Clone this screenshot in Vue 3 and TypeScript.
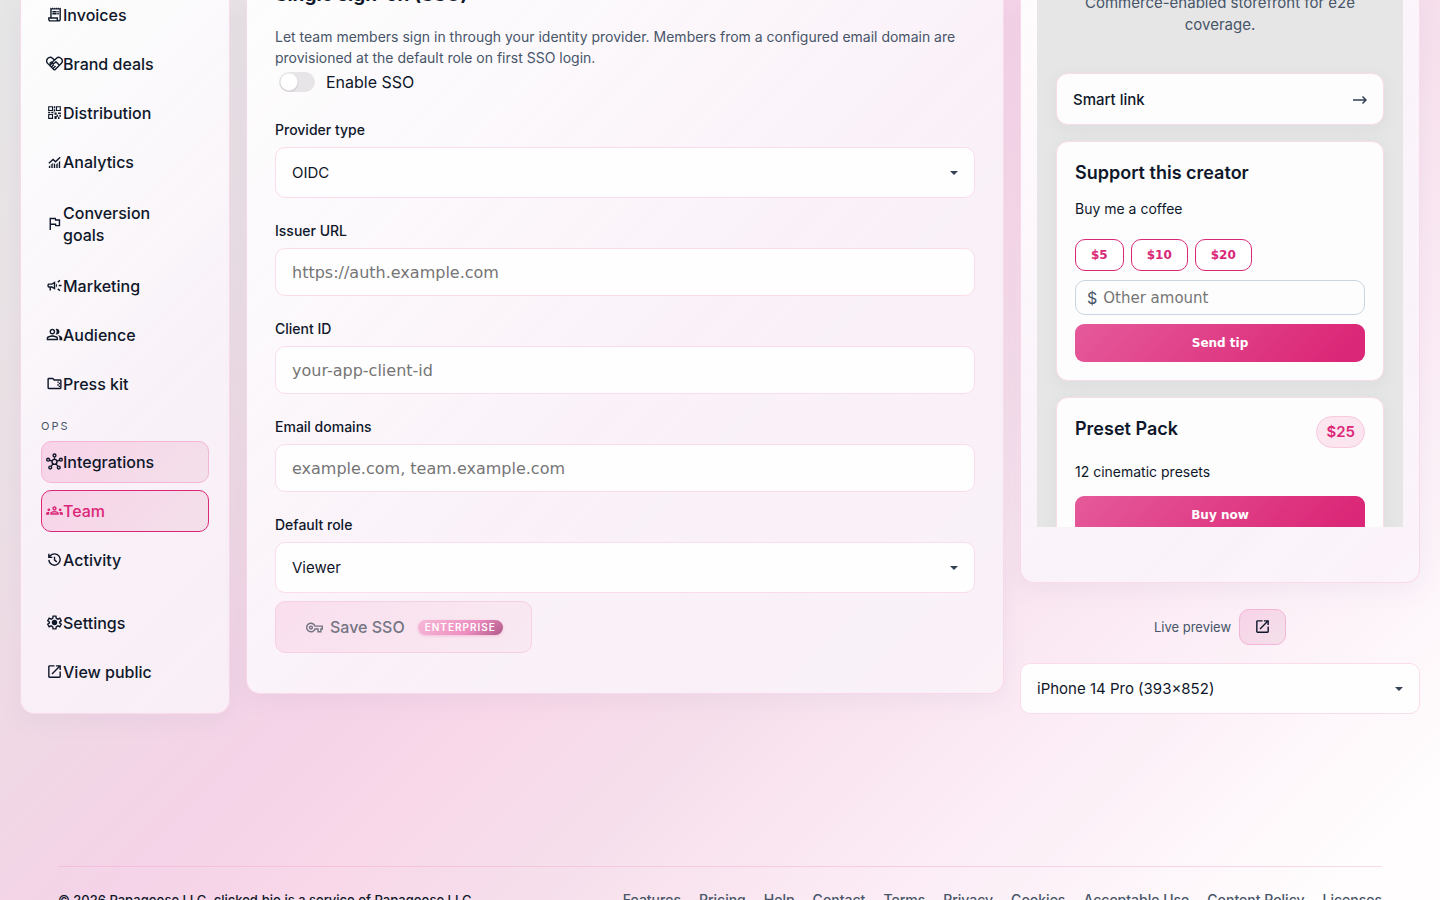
<script setup lang="ts">
import { ref } from 'vue'

interface Icon {
  fill?: string
  stroke?: string
}

interface NavItem {
  label: string
  icon: string
  state?: string
}

const icons: Record<string, Icon> = {
  invoices: {
    fill: 'M19.5 3.5L18 2l-1.5 1.5L15 2l-1.5 1.5L12 2l-1.5 1.5L9 2 7.5 3.5 6 2v14H3v3c0 1.66 1.34 3 3 3h12c1.66 0 3-1.34 3-3V2l-1.5 1.5zM15 20H6c-.55 0-1-.45-1-1v-1h10v2zm4-1c0 .55-.45 1-1 1s-1-.45-1-1v-3H8V5h11v14zM9 7h6v2H9zM16 7h2v2h-2zM9 10h6v2H9zM16 10h2v2h-2z',
  },
  deals: {
    stroke: 'M11 20.500L2 11.500C.4 9.500.6 7 2.300 5 4.500 2.800 7.500 3 9.500 4.900L12 7.200l2.500-2.300c2.200-2 5-2 7 .2 2 2 2 4.600.2 6.400L13 20.500c-.6.600-1.400.6-2 0zM12 7L8 11c1.500 1.500 3.300 1.200 4.500 0l1.500-1.400 5 5M5 12l3-2.500M5.500 14.500l3-3M8 16.500l3-3M10.500 18.500l3-3',
  },
  distribution: {
    fill: 'M3 3h7v7H3zm1.600 1.600v3.800h3.800V4.600zM14 3h7v7h-7zm1.600 1.600v3.800h3.800V4.600zM3 14h7v7H3zm1.600 1.600v3.800h3.800v-3.800zM11 3h2v3h-2zM11 7.500h2v3h-2zM3 11h3v2H3zM7.500 11h3v2h-3zM12 12h3v3h-3zM15 15h2v3h-2zM17 12h4v2h-4zM12 17h3v4h-3zM17 18h2v3h-2zM19 15h2v3h-2z',
  },
  analytics: {
    fill: 'M4 21v-2l2-2v4zM7.500 21v-5l2-2v7zM11 21v-7l2 2v5zM14.500 21v-5l2-2v7zM18 21v-8l2-2v10z',
    stroke: 'M4 14.500L10 9l3.500 3.500L20 6',
  },
  flag: {
    fill: 'M12.360 6l.4 2H18v6h-3.360l-.4-2H7V6h5.360M14 4H5v17h2v-7h5.600l.4 2h7V6h-5.600L14 4z',
  },
  marketing: {
    fill: 'M18 11v2h4v-2zM16 17.610l3.200 2.390 1.200-1.600-3.200-2.400zM20.400 5.600L19.200 4 16 6.400 17.200 8zM4 9c-1.100 0-2 .9-2 2v2c0 1.100.9 2 2 2h1v4h2v-4h1l5 3V6L8 9H4zm5.030 1.710L11 9.530v4.940l-1.970-1.180-.48-.29H4v-2h4.550l.48-.29zM15.500 12c0-1.330-.58-2.530-1.500-3.350v6.690c.92-.81 1.500-2.010 1.500-3.340z',
  },
  audience: {
    fill: 'M16.670 13.130C18.040 14.060 19 15.320 19 17v3h4v-3c0-2.180-3.570-3.470-6.330-3.870zM15 12c2.210 0 4-1.790 4-4s-1.790-4-4-4c-.47 0-.91.1-1.330.24C14.500 5.270 15 6.580 15 8s-.5 2.730-1.330 3.760c.42.14.86.24 1.330.24zM9 12c2.210 0 4-1.790 4-4s-1.790-4-4-4-4 1.790-4 4 1.790 4 4 4zm0-6c1.100 0 2 .9 2 2s-.9 2-2 2-2-.9-2-2 .9-2 2-2zm0 7c-2.670 0-8 1.340-8 4v3h16v-3c0-2.660-5.330-4-8-4zm6 5H3v-.99C3.200 16.290 6.300 15 9 15s5.800 1.290 6 2v1z',
  },
  press: {
    fill: 'M16 9h2v2h-2zM18 11h2v2h-2zM16 13h2v2h-2zM18 15h2v2h-2z',
    stroke: 'M3 5.500C3 5 3.400 5 4 5h5.600l2 2H20c.6 0 1 .4 1 1v10c0 .6-.4 1-1 1H4c-.6 0-1-.4-1-1z',
  },
  integrations: {
    stroke: 'M12 9a3.500 3.500 0 1 0 0 7 3.500 3.500 0 0 0 0-7zM12 1.500a2 2 0 1 0 0 4 2 2 0 0 0 0-4zM3 7.500a2 2 0 1 0 0 4 2 2 0 0 0 0-4zM21 7.500a2 2 0 1 0 0 4 2 2 0 0 0 0-4zM6 18.500a2 2 0 1 0 0 4 2 2 0 0 0 0-4zM18 18.500a2 2 0 1 0 0 4 2 2 0 0 0 0-4zM12 5.500V9M5 10.200l3.700 1.300M19 10.200l-3.700 1.300M9.800 15.300L7.200 18.800M14.200 15.300l2.600 3.500',
  },
  team: {
    fill: 'M4 13c1.100 0 2-.9 2-2s-.9-2-2-2-2 .9-2 2 .9 2 2 2zm1.130 1.100C4.760 14.040 4.390 14 4 14c-.99 0-1.930.21-2.780.58C.48 14.900 0 15.620 0 16.430V18h4.500v-1.610c0-.83.23-1.610.63-2.290zM20 13c1.100 0 2-.9 2-2s-.9-2-2-2-2 .9-2 2 .9 2 2 2zm4 3.430c0-.81-.48-1.530-1.220-1.850-.85-.37-1.790-.58-2.780-.58-.39 0-.76.04-1.130.1.4.68.63 1.460.63 2.290V18H24v-1.570zm-7.760-2.780c-1.170-.52-2.610-.9-4.240-.9s-3.070.39-4.240.9C6.680 14.130 6 15.210 6 16.390V18h12v-1.610c0-1.180-.68-2.260-1.760-2.740zM8.070 16c.09-.23.13-.39.91-.69.97-.38 1.990-.56 3.020-.56s2.050.18 3.020.56c.77.3.81.46.91.69H8.070zM12 8c.55 0 1 .45 1 1s-.45 1-1 1-1-.45-1-1 .45-1 1-1m0-2c-1.660 0-3 1.340-3 3s1.340 3 3 3 3-1.340 3-3-1.340-3-3-3z',
  },
  activity: {
    stroke: 'M4 12.500A8 8 0 1 0 6 6.700L4 9M4 4v5h5M12 8v4.500l3.200 3.200',
  },
  settings: {
    fill: 'M12 8.200a3.800 3.800 0 1 0 0 7.600 3.800 3.800 0 0 0 0-7.600z',
    stroke: 'M10 3h4l.5 3 2.200 1.300L19.500 6l2 3.600L19.200 11.500v1.200l2.300 1.800-2 3.500-2.800-1.200-2.200 1.300L14 21h-4l-.5-2.900-2.200-1.300L4.500 18l-2-3.500 2.300-1.800v-1.300L2.500 9.500l2-3.500 2.800 1.200L9.500 6z',
  },
  open: {
    fill: 'M19 19H5V5h7V3H5c-1.110 0-2 .9-2 2v14c0 1.100.89 2 2 2h14c1.100 0 2-.9 2-2v-7h-2v7zM14 3v2h3.590l-9.830 9.830 1.410 1.410L19 6.410V10h2V3h-7z',
  },
  key: {
    fill: 'M22 19h-6v-4h-2.680c-1.140 2.420-3.600 4-6.320 4-3.860 0-7-3.140-7-7s3.140-7 7-7c2.720 0 5.170 1.580 6.320 4H24v6h-2v4zm-4-2h2v-4h2v-2H11.940l-.23-.67C11.010 8.340 9.110 7 7 7c-2.760 0-5 2.240-5 5s2.240 5 5 5c2.110 0 4.010-1.340 4.710-3.330l.23-.67H18v4zM7 15c-1.650 0-3-1.350-3-3s1.350-3 3-3 3 1.350 3 3-1.350 3-3 3zm0-4c-.55 0-1 .45-1 1s.45 1 1 1 1-.45 1-1-.45-1-1-1z',
  },
}

const mainNav: NavItem[] = [
  { label: 'Invoices', icon: 'invoices' },
  { label: 'Brand deals', icon: 'deals' },
  { label: 'Distribution', icon: 'distribution' },
  { label: 'Analytics', icon: 'analytics' },
  { label: 'Conversion goals', icon: 'flag', state: 'nav-tall' },
  { label: 'Marketing', icon: 'marketing' },
  { label: 'Audience', icon: 'audience' },
  { label: 'Press kit', icon: 'press' },
]
const opsNav: NavItem[] = [
  { label: 'Integrations', icon: 'integrations', state: 'nav-hover' },
  { label: 'Team', icon: 'team', state: 'nav-active' },
  { label: 'Activity', icon: 'activity' },
]
const endNav: NavItem[] = [
  { label: 'Settings', icon: 'settings' },
  { label: 'View public', icon: 'open' },
]
const footerLinks = ['Features', 'Pricing', 'Help', 'Contact', 'Terms', 'Privacy', 'Cookies', 'Acceptable Use', 'Content Policy', 'Licenses']

const enabled = ref(false)
const provider = ref('OIDC')
const issuer = ref('')
const clientId = ref('')
const domains = ref('')
const role = ref('Viewer')
const device = ref('iPhone 14 Pro (393×852)')
const amount = ref('')
</script>

<template>
  <div class="page">
    <div class="workspace">
      <aside class="glass sidebar">
        <nav class="nav">
          <template v-for="(group, g) in [mainNav, opsNav, endNav]" :key="g">
            <p v-if="g === 1" class="nav-heading">OPS</p>
            <div class="nav-group">
              <a v-for="item in group" :key="item.label" href="#" class="nav-item" :class="item.state">
                <svg class="icon" viewBox="0 0 24 24" aria-hidden="true">
                  <path v-if="icons[item.icon].fill" :d="icons[item.icon].fill" class="solid" />
                  <path v-if="icons[item.icon].stroke" :d="icons[item.icon].stroke" class="line" />
                </svg>
                <span>{{ item.label }}</span>
              </a>
            </div>
          </template>
        </nav>
      </aside>

      <main class="glass panel">
        <h2 class="panel-title">Single sign-on (SSO)</h2>
        <p class="panel-text">
          Let team members sign in through your identity provider. Members from a configured email domain are
          provisioned at the default role on first SSO login.
        </p>
        <label class="toggle">
          <input v-model="enabled" type="checkbox" class="switch" />
          <span>Enable SSO</span>
        </label>
        <form class="fields" @submit.prevent>
          <div class="field">
            <label for="provider">Provider type</label>
            <div class="select-wrap">
              <select id="provider" v-model="provider" class="control select">
                <option>OIDC</option>
                <option>SAML</option>
              </select>
            </div>
          </div>
          <div class="field">
            <label for="issuer">Issuer URL</label>
            <input id="issuer" v-model="issuer" class="control" type="text" placeholder="https://auth.example.com" />
          </div>
          <div class="field">
            <label for="client">Client ID</label>
            <input id="client" v-model="clientId" class="control" type="text" placeholder="your-app-client-id" />
          </div>
          <div class="field">
            <label for="domains">Email domains</label>
            <input id="domains" v-model="domains" class="control" type="text" placeholder="example.com, team.example.com" />
          </div>
          <div class="field">
            <label for="role">Default role</label>
            <div class="select-wrap">
              <select id="role" v-model="role" class="control select">
                <option>Viewer</option>
                <option>Editor</option>
              </select>
            </div>
          </div>
          <button type="submit" class="save" disabled>
            <svg class="icon" viewBox="0 0 24 24" aria-hidden="true"><path :d="icons.key.fill" class="solid" /></svg>
            <span>Save SSO</span>
            <span class="plan">ENTERPRISE</span>
          </button>
        </form>
      </main>

      <section class="preview">
        <div class="glass frame">
          <div class="screen">
            <p class="bio">Commerce-enabled storefront for e2e coverage.</p>
            <a href="#" class="card smart">
              <span>Smart link</span>
              <svg class="arrow" viewBox="0 0 14 14" aria-hidden="true"><path d="M0 7h13M9.500 3.500L13 7l-3.500 3.500" /></svg>
            </a>
            <article class="card">
              <h3>Support this creator</h3>
              <p class="card-text">Buy me a coffee</p>
              <div class="tips">
                <button type="button" class="tip">$5</button>
                <button type="button" class="tip">$10</button>
                <button type="button" class="tip">$20</button>
              </div>
              <label class="amount">
                <span>$</span>
                <input v-model="amount" type="text" placeholder="Other amount" aria-label="Other amount" />
              </label>
              <button type="button" class="cta">Send tip</button>
            </article>
            <article class="card">
              <div class="card-head">
                <h3>Preset Pack</h3>
                <span class="price">$25</span>
              </div>
              <p class="card-text">12 cinematic presets</p>
              <button type="button" class="cta">Buy now</button>
            </article>
          </div>
        </div>
        <div class="live">
          <span>Live preview</span>
          <button type="button" class="open" aria-label="Open live preview">
            <svg class="icon" viewBox="0 0 24 24" aria-hidden="true"><path :d="icons.open.fill" class="solid" /></svg>
          </button>
        </div>
        <div class="select-wrap">
          <select v-model="device" class="control select" aria-label="Preview device">
            <option>iPhone 14 Pro (393×852)</option>
            <option>Pixel 7 (412×915)</option>
          </select>
        </div>
      </section>
    </div>

    <footer class="footer">
      <p>© 2026 Papagoose LLC. clicked.bio is a service of Papagoose LLC.</p>
      <nav class="footer-links">
        <a v-for="link in footerLinks" :key="link" href="#">{{ link }}</a>
      </nav>
    </footer>
  </div>
</template>

<style>
body {
  margin: 0;
}
</style>

<style scoped>
* {
  box-sizing: border-box;
}

.page {
  height: 100vh;
  overflow: hidden;
  font-family: Inter, 'Open Sans', sans-serif;
  font-size: 16px;
  line-height: 22px;
  color: #0f172a;
  background: linear-gradient(135deg, #e6e6e6 0%, #ebe0e5 20%, #f0d9e5 32%, #f5d3e8 43%, #f8d8e9 52%, #f6deeb 60%, #fbeaf4 74%, #fdf5fa 86%, #fffdfd 95%);
}

p,
h2,
h3 {
  margin: 0;
}

a {
  color: inherit;
  text-decoration: none;
}

button {
  cursor: pointer;
}

.workspace {
  display: grid;
  grid-template-columns: 210px minmax(0, 1fr) 400px;
  gap: 16px;
  align-items: start;
  padding: 0 20px;
}

.glass {
  border: 1px solid rgba(249, 196, 224, 0.6);
  border-top: 0;
  border-radius: 0 0 14px 14px;
  background: linear-gradient(135deg, rgba(255, 255, 255, 0.92), rgba(250, 245, 251, 0.86) 60%, rgba(250, 243, 249, 0.84));
  box-shadow: 0 6px 24px rgba(120, 110, 160, 0.08);
}

/* Sidebar */
.sidebar {
  padding: 0 20px 20px;
}

.nav-group {
  display: flex;
  flex-direction: column;
  gap: 7px;
}

.nav-group:first-child {
  margin-top: -6px;
}

.nav-group:last-child {
  margin-top: 21px;
}

.nav-item {
  display: flex;
  align-items: center;
  padding: 9px 4px;
  border: 1px solid transparent;
  border-radius: 10px;
  font-weight: 500;
}

.nav-item .icon {
  margin-bottom: 2px;
}

.nav-tall span {
  max-width: 110px;
  padding: 2px 0;
}

.nav-heading {
  margin: 11px 0 5px;
  font-size: 11px;
  line-height: 20px;
  letter-spacing: 2px;
  color: #475569;
}

.nav-hover,
.nav-active,
.open {
  border-color: #f3b5d6;
  background: linear-gradient(135deg, #f8d3e8, #f3e0ea);
}

.nav-active {
  border-color: #db2777;
  color: #db2777;
}

.icon {
  flex: none;
  width: 17px;
  height: 17px;
}

.solid {
  fill: currentColor;
  fill-rule: evenodd;
}

.line {
  fill: none;
  stroke: currentColor;
  stroke-width: 2;
}

/* Settings panel */
.panel {
  padding: 0 28px 40px;
}

.panel-title {
  margin-top: -18px;
  font-size: 19px;
  line-height: 26px;
  font-weight: 700;
}

.panel-text {
  margin-top: 18px;
  font-size: 14px;
  line-height: 21px;
  color: #475569;
}

.toggle {
  display: flex;
  align-items: center;
  gap: 11px;
  margin-top: 3px;
  padding-left: 4px;
}

.switch {
  flex: none;
  width: 36px;
  height: 20px;
  margin: 0;
  border-radius: 10px;
  appearance: none;
  background:
    radial-gradient(circle at 10px 10px, #ffffff 8px, transparent 9px),
    radial-gradient(circle at 10px 11px, #cfcbd2 8px, transparent 10px) #e8e5e9;
}

.switch:checked {
  background: radial-gradient(circle at 26px 10px, #ffffff 8px, transparent 9px) #db2777;
}

.fields {
  display: flex;
  flex-direction: column;
  gap: 24px;
  margin-top: 28px;
}

.field label {
  display: block;
  margin-bottom: 8px;
  font-size: 14px;
  line-height: 18px;
  font-weight: 500;
}

.control {
  display: block;
  width: 100%;
  height: 48px;
  padding: 0 16px;
  border: 1px solid #fadcea;
  border-radius: 10px;
  background: #fffeff;
  font-family: 'DejaVu Sans', sans-serif;
  font-size: 16px;
  color: #0f172a;
}

.control::placeholder,
.amount input::placeholder {
  color: #757575;
  opacity: 1;
}

.select {
  height: 51px;
  appearance: none;
  font-family: Inter, 'Open Sans', sans-serif;
  font-size: 15px;
}

.select-wrap {
  position: relative;
}

.select-wrap::after {
  content: '';
  position: absolute;
  top: 24px;
  right: 17px;
  border: 4px solid transparent;
  border-top-color: #334155;
  border-bottom-width: 0;
  pointer-events: none;
}

.save {
  display: flex;
  align-items: center;
  align-self: flex-start;
  gap: 7px;
  height: 52px;
  margin-top: -16px;
  padding: 0 28px 0 30px;
  border: 1px solid #f7cfe3;
  border-radius: 10px;
  background: linear-gradient(135deg, #fadfee, #f8e9f2);
  font: 500 16px/22px Inter, 'Open Sans', sans-serif;
  color: #747583;
}

.plan {
  margin-left: 6px;
  padding: 0 7px;
  border-radius: 8px;
  background: linear-gradient(135deg, #f7b9d9, #ee8fc0 60%, #b0598b);
  box-shadow: 0 1px 3px rgba(219, 39, 119, 0.2);
  font-size: 10px;
  line-height: 15px;
  font-weight: 600;
  letter-spacing: 1px;
  color: #ffffff;
}

/* Live preview */
.frame {
  padding: 0 16px 55px;
}

.screen {
  display: flex;
  flex-direction: column;
  gap: 16px;
  height: 527px;
  padding: 0 19px;
  overflow: hidden;
  background: #e6e6e6;
}

.bio {
  align-self: center;
  width: 290px;
  margin: -8px 0 21px;
  font-size: 15px;
  text-align: center;
  color: #475569;
}

.card {
  flex: none;
  padding: 18px;
  border: 1px solid #f9dce9;
  border-radius: 12px;
  background: #fdfdfd;
  box-shadow: 0 4px 16px rgba(100, 116, 139, 0.08);
}

.smart {
  display: flex;
  align-items: center;
  justify-content: space-between;
  padding: 15px 16px 13px;
  font-size: 15px;
  font-weight: 500;
}

.arrow {
  width: 14px;
  height: 14px;
  fill: none;
  stroke: #334155;
  stroke-width: 1.5;
}

.card h3 {
  font-size: 18px;
  line-height: 26px;
  font-weight: 600;
}

.card-text {
  margin-top: 12px;
  font-size: 14px;
}

.tips {
  display: flex;
  gap: 7px;
  margin-top: 19px;
}

.tip {
  height: 32px;
  padding: 0 15px;
  border: 1px solid #db2777;
  border-radius: 10px;
  background: #ffffff;
  font: 700 12px/16px 'DejaVu Sans', sans-serif;
  color: #db2777;
}

.amount {
  display: flex;
  align-items: center;
  gap: 6px;
  height: 35px;
  margin-top: 9px;
  padding: 0 11px;
  border: 1px solid #cbd5e1;
  border-radius: 10px;
  color: #475569;
}

.amount input {
  flex: 1;
  min-width: 0;
  padding: 0;
  border: 0;
  outline: 0;
  background: transparent;
  font: 15px/20px 'DejaVu Sans', sans-serif;
}

.cta {
  width: 100%;
  height: 38px;
  margin-top: 9px;
  border: 0;
  border-radius: 9px;
  background: linear-gradient(135deg, #e55a9a, #db2777 90%);
  font: 700 12px/16px 'DejaVu Sans', sans-serif;
  color: #ffffff;
}

.card-head {
  display: flex;
  justify-content: space-between;
}

.price {
  padding: 4px 9px;
  border: 1px solid #f8c9df;
  border-radius: 16px;
  background: #fbe6f0;
  font-size: 15px;
  font-weight: 600;
  color: #db2777;
}

.card-head + .card-text {
  margin-top: 13px;
}

.card-head ~ .cta {
  margin-top: 13px;
}

.live {
  display: flex;
  align-items: center;
  justify-content: center;
  gap: 8px;
  margin: 26px 0 18px;
  font-size: 13px;
  color: #475569;
}

.open {
  display: grid;
  place-items: center;
  width: 47px;
  height: 36px;
  padding: 0 0 2px;
  border: 1px solid #f3b5d6;
  border-radius: 10px;
  color: #0f172a;
}

/* Footer */
.footer {
  display: flex;
  justify-content: space-between;
  margin: 152px 58px 0;
  padding-top: 22px;
  border-top: 1px solid rgba(244, 160, 205, 0.4);
  font-size: 13px;
  font-weight: 500;
  white-space: nowrap;
}

.footer-links {
  display: flex;
  gap: 18px;
  font-size: 14px;
  color: #475569;
}
</style>
